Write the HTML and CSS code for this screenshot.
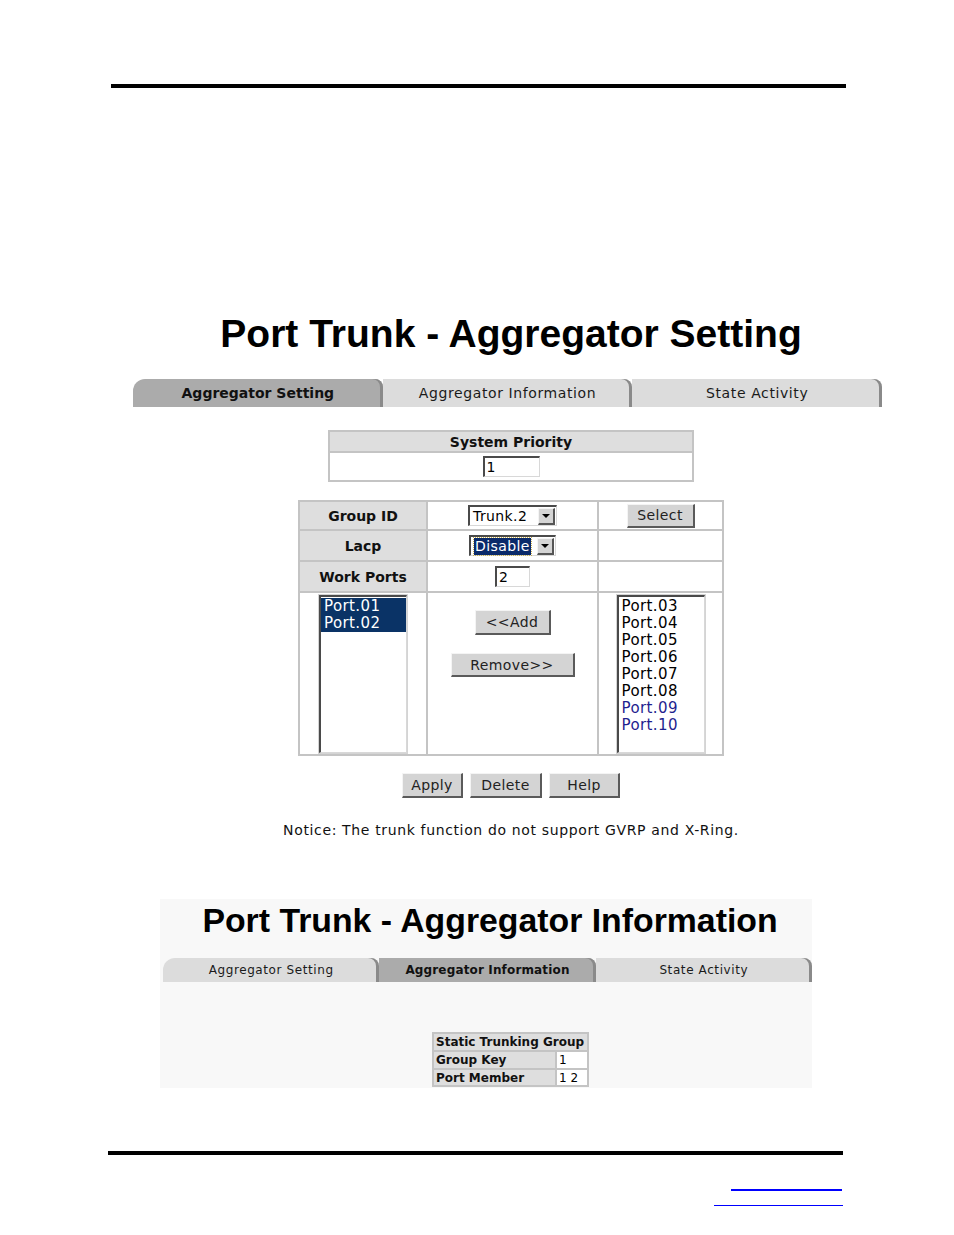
FILE: index.html
```html
<!DOCTYPE html>
<html lang="en">

<head>
    <meta charset="UTF-8" />
    <meta name="viewport" content="width=device-width, initial-scale=1.0" />
    <title>Port Trunk</title>
    <link rel="stylesheet" href="styles.css">
</head>

<body>
    <div class="rule rule-top"></div>

    <!-- first capture: aggregator setting -->
    <section class="shot shot-setting">
        <h1 class="shot-title">Port Trunk - Aggregator Setting</h1>
        <div class="tabs">
            <div class="tab tab-active">Aggregator Setting</div>
            <div class="tab">Aggregator Information</div>
            <div class="tab">State Activity</div>
        </div>

        <table class="grid priority">
            <tr>
                <th class="priority-head">System Priority</th>
            </tr>
            <tr>
                <td class="priority-cell"><input class="field field-priority" type="text" value="1" /></td>
            </tr>
        </table>

        <table class="grid trunk">
            <colgroup>
                <col class="col-label" />
                <col class="col-mid" />
                <col class="col-right" />
            </colgroup>
            <tr class="row-short">
                <th>Group ID</th>
                <td>
                    <span class="select select-group">
                        <span class="select-value">Trunk.2</span>
                        <span class="select-arrow"></span>
                    </span>
                </td>
                <td><button class="btn btn-select" type="button">Select</button></td>
            </tr>
            <tr class="row-mid">
                <th>Lacp</th>
                <td>
                    <span class="select select-lacp">
                        <span class="select-value"><span class="select-focus">Disable</span></span>
                        <span class="select-arrow"></span>
                    </span>
                </td>
                <td></td>
            </tr>
            <tr class="row-mid">
                <th>Work Ports</th>
                <td><input class="field field-ports" type="text" value="2" /></td>
                <td></td>
            </tr>
            <tr class="row-lists">
                <td>
                    <div class="listbox">
                        <div class="option option-selected">Port.01</div>
                        <div class="option option-selected">Port.02</div>
                    </div>
                </td>
                <td class="move-cell">
                    <div class="move-buttons">
                        <button class="btn btn-add" type="button">&lt;&lt;Add</button>
                        <button class="btn btn-remove" type="button">Remove&gt;&gt;</button>
                    </div>
                </td>
                <td>
                    <div class="listbox">
                        <div class="option">Port.03</div>
                        <div class="option">Port.04</div>
                        <div class="option">Port.05</div>
                        <div class="option">Port.06</div>
                        <div class="option">Port.07</div>
                        <div class="option">Port.08</div>
                        <div class="option option-blue">Port.09</div>
                        <div class="option option-blue">Port.10</div>
                    </div>
                </td>
            </tr>
        </table>

        <div class="actions">
            <button class="btn btn-apply" type="button">Apply</button>
            <button class="btn btn-delete" type="button">Delete</button>
            <button class="btn btn-help" type="button">Help</button>
        </div>

        <p class="notice">Notice: The trunk function do not support GVRP and X-Ring.</p>
    </section>

    <!-- second capture: aggregator information -->
    <section class="shot shot-info">
        <h1 class="shot-title shot-title-small">Port Trunk - Aggregator Information</h1>
        <div class="tabs tabs-small">
            <div class="tab">Aggregator Setting</div>
            <div class="tab tab-active">Aggregator Information</div>
            <div class="tab">State Activity</div>
        </div>

        <table class="grid info">
            <colgroup>
                <col class="col-info-label" />
                <col class="col-info-value" />
            </colgroup>
            <tr class="info-row">
                <th colspan="2">Static Trunking Group</th>
            </tr>
            <tr class="info-row">
                <th>Group Key</th>
                <td>1</td>
            </tr>
            <tr class="info-row info-row-last">
                <th>Port Member</th>
                <td>1 2</td>
            </tr>
        </table>
    </section>

    <div class="rule rule-bottom"></div>
    <a class="footer-link footer-link-top" href="#"></a>
    <a class="footer-link footer-link-bottom" href="#"></a>
</body>

</html>
```

FILE: styles.css
```css
body {
    margin: 0;
    background: #fff;
    color: #000;
    font-family: "DejaVu Sans", Verdana, sans-serif;
}

.rule {
    width: 735px;
    height: 4px;
    background: #000;
}

.rule-top {
    margin: 84px 0 0 111px;
}

.rule-bottom {
    margin: 63px 0 0 108px;
}

/* screenshots */
.shot-setting {
    width: 742px;
    margin: 223px 0 0 140px;
}

.shot-info {
    width: 652px;
    margin: 60px 0 0 160px;
    padding: 2px 0 1px;
    background: #f8f8f8;
}

.shot-title {
    margin: 0;
    font: bold 39px/46px "Liberation Sans", Arial, sans-serif;
    text-align: center;
    color: #000;
}

.shot-title-small {
    padding-left: 8px;
    font-size: 33.8px;
    line-height: 38px;
}

/* tab strip */
.tabs {
    display: flex;
    width: 749px;
    height: 28px;
    margin: 22px 0 0 -7px;
}

.tab {
    flex: 1;
    background: #dcdcdc;
    color: #1a1a1a;
    font-size: 14px;
    line-height: 28px;
    letter-spacing: 0.6px;
    text-align: center;
    border-top-right-radius: 8px;
    box-shadow: inset -3px 0 0 #8a8a8a;
}

.tab:first-child {
    border-top-left-radius: 12px;
}

.tab-active {
    background: #ababab;
    font-weight: bold;
    letter-spacing: 0;
    color: #111;
}

.tabs-small {
    width: 649px;
    height: 24px;
    margin: 19px 0 0 3px;
}

.tabs-small .tab {
    font-size: 12px;
    line-height: 24px;
}

.tabs-small .tab-active {
    letter-spacing: 0.15px;
}

/* tables */
.grid {
    border-collapse: separate;
    border-spacing: 0;
    border: 1px solid #c4c4c4;
    table-layout: fixed;
}

.grid th,
.grid td {
    box-sizing: border-box;
    padding: 0;
    border: 1px solid #c4c4c4;
    text-align: center;
    vertical-align: middle;
    font-size: 14px;
}

.grid th {
    background: #dedede;
    font-weight: bold;
    color: #111;
}

.priority {
    width: 366px;
    margin: 23px auto 0;
}

.priority-head {
    height: 21px;
}

.priority-cell {
    height: 29px;
    background: #fff;
}

.trunk {
    width: 426px;
    margin: 18px auto 0;
}

.col-label {
    width: 128px;
}

.col-mid {
    width: 171px;
}

.col-right {
    width: 125px;
}

.row-short th,
.row-short td {
    height: 29px;
}

.row-mid th,
.row-mid td {
    height: 31px;
}

.row-lists td {
    height: 163px;
}

.move-cell {
    vertical-align: top !important;
}

/* form controls */
.field {
    box-sizing: border-box;
    height: 21px;
    padding: 0 2px;
    border-style: solid;
    border-width: 2px 1px 1px 2px;
    border-color: #4a4a4a #d8d8d8 #d8d8d8 #4a4a4a;
    background: #fff;
    font: 14px "DejaVu Sans", Verdana, sans-serif;
    color: #000;
    vertical-align: middle;
}

.field-priority {
    width: 57px;
}

.field-ports {
    width: 35px;
}

.select {
    display: inline-flex;
    align-items: center;
    box-sizing: border-box;
    height: 21px;
    border-style: solid;
    border-width: 2px 1px 1px 2px;
    border-color: #4a4a4a #d8d8d8 #d8d8d8 #4a4a4a;
    background: #fff;
    vertical-align: middle;
}

.select-group {
    width: 89px;
}

.select-lacp {
    width: 87px;
}

.select-value {
    flex: 1;
    padding-left: 3px;
    text-align: left;
    font-size: 14px;
    line-height: 17px;
    letter-spacing: 0.4px;
}

.select-focus {
    display: inline-block;
    padding: 0 1px;
    background: #0a2a6a;
    color: #fff;
    outline: 1px dotted #c8b050;
}

.select-arrow {
    display: flex;
    align-items: center;
    justify-content: center;
    box-sizing: border-box;
    width: 17px;
    height: 17px;
    margin-right: 1px;
    background: #d4d4d4;
    border-style: solid;
    border-width: 1px 2px 2px 1px;
    border-color: #f4f4f4 #555 #555 #f4f4f4;
}

.select-arrow::after {
    content: "";
    border-left: 4px solid transparent;
    border-right: 4px solid transparent;
    border-top: 4px solid #000;
}

.btn {
    box-sizing: border-box;
    height: 25px;
    padding: 0;
    background: #d4d4d4;
    border-style: solid;
    border-width: 1px 2px 2px 1px;
    border-color: #f4f4f4 #5a5a5a #5a5a5a #f4f4f4;
    font: 14px "DejaVu Sans", Verdana, sans-serif;
    letter-spacing: 0.4px;
    color: #222;
}

.btn-select {
    width: 68px;
    height: 24px;
}

.btn-add {
    width: 76px;
}

.btn-remove {
    width: 124px;
    height: 24px;
}

.btn-apply {
    width: 61px;
}

.btn-delete {
    width: 72px;
}

.btn-help {
    width: 71px;
}

.move-buttons {
    display: flex;
    flex-direction: column;
    align-items: center;
    gap: 18px;
    padding-top: 17px;
}

.listbox {
    box-sizing: border-box;
    width: 88px;
    height: 158px;
    margin: 0 auto;
    padding-top: 1px;
    border-style: solid;
    border-width: 2px 1px 1px 2px;
    border-color: #4a4a4a #d8d8d8 #d8d8d8 #4a4a4a;
    box-shadow: 0 0 0 1px #d4d4d4;
    background: #fff;
    text-align: left;
}

.option {
    padding-left: 3px;
    font-size: 15px;
    line-height: 17px;
    letter-spacing: 0.4px;
    color: #000;
}

.option-selected {
    background: #0a3366;
    color: #fff;
}

.option-blue {
    color: #1f1f8f;
}

.actions {
    display: flex;
    justify-content: center;
    gap: 7px;
    margin-top: 17px;
}

.notice {
    margin: 24px 0 0;
    font-size: 14px;
    line-height: 17px;
    letter-spacing: 0.64px;
    text-align: center;
    color: #111;
}

/* info table */
.info {
    width: 157px;
    margin: 50px 0 0 272px;
}

.col-info-label {
    width: 123px;
}

.col-info-value {
    width: 32px;
}

.info th,
.info td {
    height: 18px;
    padding-left: 2px;
    text-align: left;
    font-size: 12px;
}

.info td {
    background: #fff;
}

.info-row-last th,
.info-row-last td {
    height: 17px;
}

/* footer */
.footer-link {
    display: block;
    background: #00f;
}

.footer-link-top {
    width: 111px;
    height: 2px;
    margin: 34px 0 0 731px;
}

.footer-link-bottom {
    width: 129px;
    height: 1px;
    margin: 14px 0 0 714px;
}
```
